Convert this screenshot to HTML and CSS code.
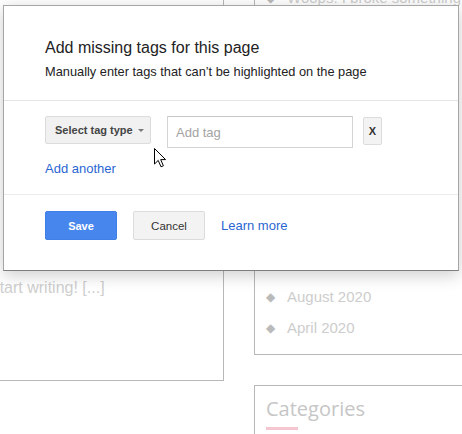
FILE: index.html
```html
<!DOCTYPE html>
<html lang="en">
<head>
    <meta charset="UTF-8">
    <title>Add missing tags</title>
    <link rel="stylesheet" href="styles.css">
</head>
<body>

<div class="page">
    <div class="main-card">
        <p class="excerpt">Start writing! [...]</p>
    </div>

    <div class="sidebar">
        <div class="widget">
            <ul class="widget-list">
                <li>Woops: I broke something</li>
                <li>Hello world!</li>
                <li>Getting started</li>
                <li>Notes from the road</li>
                <li>A quick update</li>
                <li>First post</li>
            </ul>
            <div class="widget-title">Archives</div>
            <ul class="widget-list">
                <li>August 2020</li>
                <li>April 2020</li>
            </ul>
        </div>
        <div class="widget widget-cats">
            <h3 class="cats-title">Categories</h3>
        </div>
    </div>
</div>

<!-- tag dialog -->
<div class="dialog">
    <div class="dialog-header">
        <div class="dialog-title">Add missing tags for this page</div>
        <div class="dialog-sub">Manually enter tags that can’t be highlighted on the page</div>
    </div>

    <div class="dialog-body">
        <div class="tag-row">
            <button class="btn btn-select">Select tag type <span class="caret"></span></button>
            <input class="tag-input" type="text" placeholder="Add tag">
            <button class="btn btn-x">X</button>
        </div>
        <a class="link add-another" href="#">Add another</a>
    </div>

    <div class="dialog-footer">
        <button class="btn btn-save">Save</button>
        <button class="btn btn-cancel">Cancel</button>
        <a class="link learn-more" href="#">Learn more</a>
    </div>
</div>

<svg class="cursor" width="13" height="20" viewBox="0 0 13 20">
    <path d="M0.5 0.5 L0.5 16 L4.2 12.4 L7 18.8 L9.4 17.8 L6.7 11.6 L11.6 11.6 Z" fill="#fff" stroke="#000" stroke-width="1"/>
</svg>

</body>
</html>
```

FILE: styles.css
```css
body {
    margin: 0;
    width: 462px;
    height: 434px;
    overflow: hidden;
    background-color: #fff;
    font-family: "Liberation Sans", Arial, sans-serif;
}

/* faded page behind the dialog */
.page {
    display: flex;
    align-items: flex-start;
    gap: 30px;
}
.main-card {
    flex: none;
    box-sizing: border-box;
    width: 244px;
    height: 421px;
    margin-left: -20px;
    margin-top: -40px;
    padding-left: 8px;
    border: 1px solid #b8b8b8;
}
.excerpt {
    margin: 315px 0 0;
    font-size: 16px;
    line-height: 24px;
    color: #cfcfcf;
}
.sidebar {
    flex: none;
    width: 240px;
    margin-top: -19px;
}
.widget {
    border: 1px solid #b8b8b8;
    padding: 0 20px 11px 11px;
}
.widget-cats {
    margin-top: 30px;
    padding-top: 10px;
    height: 80px;
}
.widget-list {
    list-style: none;
    margin: 0;
    padding: 0;
}
.widget-list li {
    display: flex;
    align-items: center;
    height: 31px;
    font-size: 15px;
    color: #cdcdcd;
    white-space: nowrap;
}
.widget-list li:before {
    content: "◆";
    width: 21px;
    flex: none;
    font-size: 12px;
    color: #bababa;
}
.widget-title {
    margin: 62px 0 21px;
    height: 30px;
    line-height: 30px;
    font-size: 20px;
    color: #ccc;
}
.cats-title {
    margin: 0;
    font-family: "Open Sans", sans-serif;
    font-weight: normal;
    font-size: 20px;
    line-height: 26px;
    color: #c6c6c6;
}
.cats-title:after {
    content: "";
    display: block;
    width: 32px;
    height: 3px;
    margin-top: 5px;
    background-color: #f3c6d0;
}

/* dialog */
.dialog {
    position: absolute;
    left: 3px;
    top: 5px;
    width: 456px;
    box-sizing: border-box;
    background-color: #fff;
    border: 1px solid #a6a6a6;
    border-bottom-color: #7e7e7e;
    box-shadow: 0 4px 16px rgba(0,0,0,0.2);
}
.dialog-header {
    padding: 32px 41px 20px;
    border-bottom: 1px solid #e5e5e5;
}
.dialog-title {
    font-size: 16px;
    line-height: 20px;
    color: #222;
}
.dialog-sub {
    margin-top: 6px;
    font-size: 12.8px;
    line-height: 16px;
    color: #222;
}
.dialog-body {
    padding: 15px 41px 17px;
    border-bottom: 1px solid #ebebeb;
}
.tag-row {
    display: flex;
    align-items: flex-start;
}
.btn {
    box-sizing: border-box;
    font-family: "Liberation Sans", Arial, sans-serif;
    font-size: 11px;
    font-weight: bold;
    color: #444;
    background-color: #f3f3f3;
    border: 1px solid #dcdcdc;
    border-radius: 2px;
    padding: 0;
    cursor: pointer;
}
.btn-select {
    width: 106px;
    height: 28px;
    padding: 0 0 0 9px;
    text-align: left;
    background-color: #f1f1f1;
}
.caret {
    display: inline-block;
    width: 0;
    height: 0;
    margin-left: 2px;
    vertical-align: 2px;
    border-left: 3px solid transparent;
    border-right: 3px solid transparent;
    border-top: 3px solid #777;
}
.tag-input {
    box-sizing: border-box;
    width: 186px;
    height: 32px;
    margin-left: 16px;
    padding: 0 8px;
    border: 1px solid #d3d3d3;
    border-top-color: #c6c6c6;
    border-radius: 1px;
    font-family: "Liberation Sans", Arial, sans-serif;
    font-size: 13px;
    color: #222;
}
.tag-input::placeholder {
    color: #a3a3a3;
}
.btn-x {
    width: 19px;
    height: 28px;
    margin: 1px 0 0 10px;
    font-size: 11px;
    color: #333;
}
.link {
    font-size: 13px;
    line-height: 16px;
    color: #2a66d3;
    text-decoration: none;
}
.add-another {
    display: block;
    width: max-content;
    margin-top: 13px;
}
.dialog-footer {
    display: flex;
    align-items: center;
    padding: 16px 41px 30px;
}
.btn-save {
    width: 72px;
    height: 29px;
    color: #fff;
    background-color: #4787ed;
    border-color: #3f7fe6;
}
.btn-cancel {
    width: 72px;
    height: 29px;
    margin-left: 16px;
    font-weight: normal;
    font-size: 11.5px;
    color: #333;
}
.learn-more {
    margin-left: 16px;
}

.cursor {
    position: absolute;
    left: 154px;
    top: 148px;
}
```
